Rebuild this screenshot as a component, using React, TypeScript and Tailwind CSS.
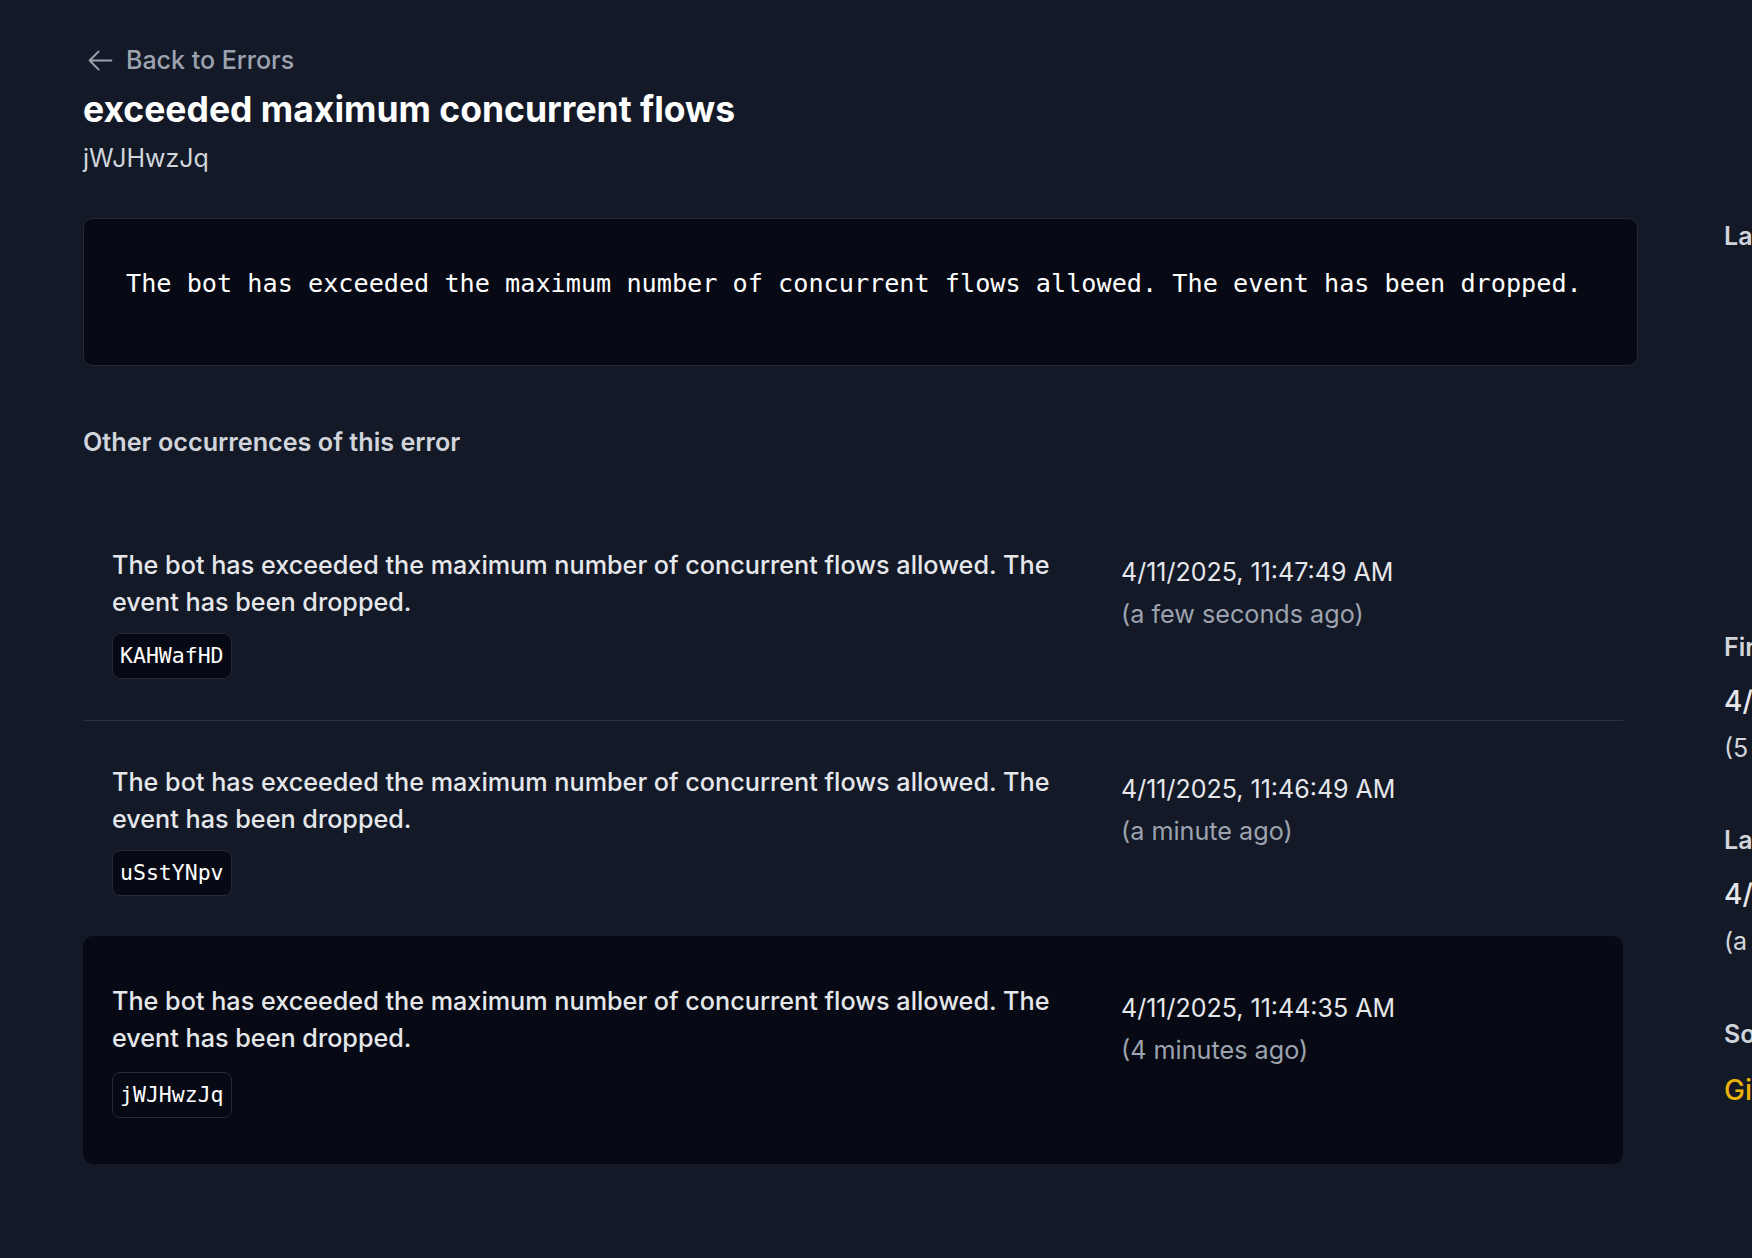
import React from 'react';

const MESSAGE =
  'The bot has exceeded the maximum number of concurrent flows allowed. The event has been dropped.';

const occurrences = [
  { id: 'KAHWafHD', date: '4/11/2025, 11:47:49 AM', ago: '(a few seconds ago)', active: false },
  { id: 'uSstYNpv', date: '4/11/2025, 11:46:49 AM', ago: '(a minute ago)', active: false },
  { id: 'jWJHwzJq', date: '4/11/2025, 11:44:35 AM', ago: '(4 minutes ago)', active: true },
];

function ArrowLeftIcon() {
  return (
    <svg viewBox="0 0 24 24" fill="none" stroke="currentColor" strokeWidth={1.6} className="h-[29px] w-[29px]">
      <path strokeLinecap="round" strokeLinejoin="round" d="M10.5 19.5 3 12m0 0 7.5-7.5M3 12h18" />
    </svg>
  );
}

function OccurrenceRow({ item, last }: { item: (typeof occurrences)[number]; last: boolean }) {
  return (
    <div
      className={
        item.active
          ? 'grid grid-cols-[980px_1fr] gap-x-[29px] px-[29px] pt-[47px] pb-[46px] rounded-[10px] bg-[#070a14]'
          : last
            ? 'grid grid-cols-[980px_1fr] gap-x-[29px] px-[29px] pt-[43px] pb-[40px]'
            : 'grid grid-cols-[980px_1fr] gap-x-[29px] px-[29px] pt-[43px] pb-[41px] border-b border-[#2a3142]'
      }
    >
      <div>
        <p className="text-[25.2px] leading-[37px] font-medium text-[#e5e7eb]">{MESSAGE}</p>
        <span
          className={
            item.active
              ? "mt-[15px] inline-block rounded-[8px] border border-[#252b38] bg-[#070a14] px-[7px] py-[7px] font-['DejaVu_Sans_Mono',monospace] text-[21.5px] leading-[30px] text-white"
              : "mt-[12px] inline-block rounded-[8px] border border-[#252b38] bg-[#070a14] px-[7px] py-[7px] font-['DejaVu_Sans_Mono',monospace] text-[21.5px] leading-[30px] text-white"
          }
        >
          {item.id}
        </span>
      </div>
      <div className="pt-[7px]">
        <div className="text-[25px] leading-[37px] text-[#e5e7eb]">{item.date}</div>
        <div className="mt-[5px] text-[25.2px] leading-[37px] text-[#9ca3af]">{item.ago}</div>
      </div>
    </div>
  );
}

function SideStat({ label, value, ago }: { label: string; value: string; ago: string }) {
  return (
    <div>
      <div className="text-[25px] leading-[32px] font-semibold text-[#d1d5db]">{label}</div>
      <div className="mt-[20px] text-[28px] leading-[36px] font-medium text-[#e5e7eb]">{value}</div>
      <div className="mt-[13px] text-[25px] leading-[32px] text-[#d1d5db]">{ago}</div>
    </div>
  );
}

export default function App() {
  return (
    <div className="min-h-screen w-full overflow-hidden bg-[#131927] font-['Inter',sans-serif]">
      <div className="flex pl-[83px] pt-[45px] pb-[95px]">
        {/* main column */}
        <div className="w-[1555px] shrink-0">
          <a className="flex items-center gap-[11px] pl-[3px] text-[25px] leading-[30px] font-medium text-[#9ca3af]">
            <ArrowLeftIcon />
            <span>Back to Errors</span>
          </a>
          <h1 className="mt-[15px] text-[35.5px] leading-[40px] font-bold text-white">
            exceeded maximum concurrent flows
          </h1>
          <div className="mt-[12px] text-[25px] leading-[32px] text-[#d1d5db]">jWJHwzJq</div>

          <div className="mt-[44px] rounded-[10px] border border-[#232937] bg-[#070a14] pl-[42px] pr-[20px] pt-[47px] pb-[63px]">
            <pre className="font-['DejaVu_Sans_Mono',monospace] text-[25.2px] leading-[36px] text-white">{MESSAGE}</pre>
          </div>

          <h2 className="mt-[60px] text-[25.2px] leading-[32px] font-semibold text-[#d1d5db]">
            Other occurrences of this error
          </h2>

          <div className="mt-[46px] w-[1540px]">
            {occurrences.map((item, i) => (
              <OccurrenceRow key={item.id} item={item} last={i === occurrences.length - 2} />
            ))}
          </div>
        </div>

        {/* sidebar, cut by the window edge */}
        <div className="ml-[86px] mt-[175px] w-[420px] shrink-0">
          <div className="text-[25px] leading-[32px] font-semibold text-[#d1d5db]">Last 24 hours</div>
          <div className="h-[379px]" />
          <SideStat label="First seen" value="4/11/2025, 11:43:02 AM" ago="(5 minutes ago)" />
          <div className="mt-[60px]">
            <SideStat label="Last seen" value="4/11/2025, 11:47:49 AM" ago="(a few seconds ago)" />
          </div>
          <div className="mt-[61px]">
            <div className="text-[25px] leading-[32px] font-semibold text-[#d1d5db]">Source</div>
            <div className="mt-[22px] text-[28px] leading-[36px] font-medium text-[#eab308]">GitHub</div>
          </div>
        </div>
      </div>
    </div>
  );
}
